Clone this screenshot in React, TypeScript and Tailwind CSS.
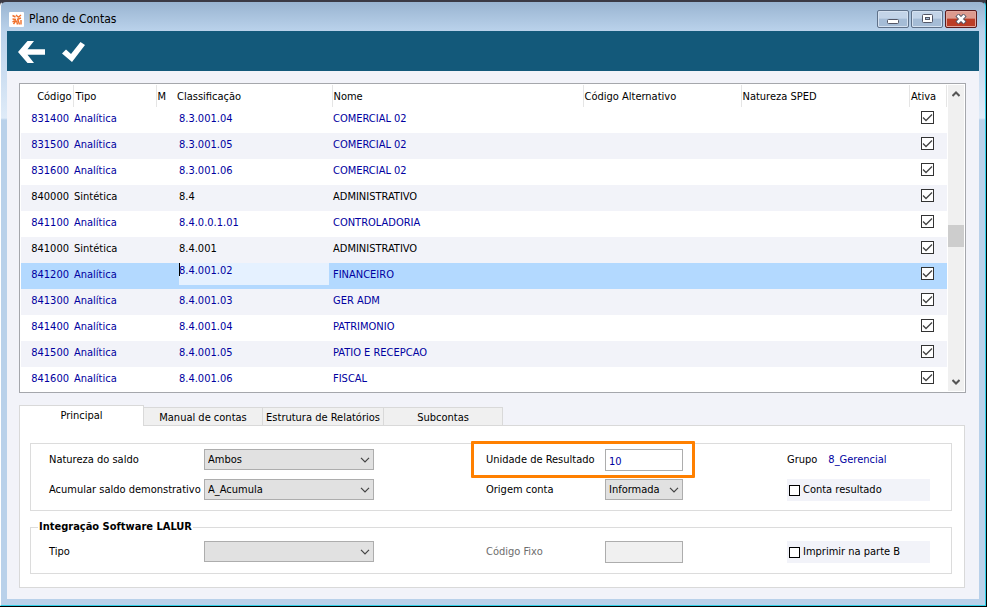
import { useState } from "react";

type Conta = {
  codigo: string;
  tipo: string;
  classificacao: string;
  nome: string;
};

const contas: Conta[] = [
  { codigo: "831400", tipo: "Analítica", classificacao: "8.3.001.04", nome: "COMERCIAL 02" },
  { codigo: "831500", tipo: "Analítica", classificacao: "8.3.001.05", nome: "COMERCIAL 02" },
  { codigo: "831600", tipo: "Analítica", classificacao: "8.3.001.06", nome: "COMERCIAL 02" },
  { codigo: "840000", tipo: "Sintética", classificacao: "8.4", nome: "ADMINISTRATIVO" },
  { codigo: "841100", tipo: "Analítica", classificacao: "8.4.0.0.1.01", nome: "CONTROLADORIA" },
  { codigo: "841000", tipo: "Sintética", classificacao: "8.4.001", nome: "ADMINISTRATIVO" },
  { codigo: "841200", tipo: "Analítica", classificacao: "8.4.001.02", nome: "FINANCEIRO" },
  { codigo: "841300", tipo: "Analítica", classificacao: "8.4.001.03", nome: "GER ADM" },
  { codigo: "841400", tipo: "Analítica", classificacao: "8.4.001.04", nome: "PATRIMONIO" },
  { codigo: "841500", tipo: "Analítica", classificacao: "8.4.001.05", nome: "PATIO E RECEPCAO" },
  { codigo: "841600", tipo: "Analítica", classificacao: "8.4.001.06", nome: "FISCAL" },
];

const tabs = [
  { label: "Principal", width: "w-[125px]" },
  { label: "Manual de contas", width: "w-[119px]" },
  { label: "Estrutura de Relatórios", width: "w-[121px]" },
  { label: "Subcontas", width: "w-[119px]" },
];

const formRow =
  "grid grid-cols-[155px_170px_14fr_119px_78px_13fr_143px] items-center pl-[18px] pr-[21px]";

const TitleBar = () => (
  <div className="flex h-[29px] items-start justify-between pl-0.5 pr-0.5">
    <div className="flex h-[34px] items-center gap-[5px] text-xs text-black">
      <svg viewBox="0 0 15 15" className="h-[15px] w-[15px]">
        <rect width="15" height="15" rx="1" fill="#fff" />
        <g fill="none" stroke="#f0712c" strokeWidth="1.4">
          <path d="M3.500 3.500l3 1.500M7 3l2 2M9 5.500l3-2.500M3.500 7l3.500.5M8 7.500l4-1.500M3.500 10l3-2M4.500 12l2.500-3.500M8.500 12.500l-1-4M10.500 12.500l-1.500-4.500M12 12.500V8" />
        </g>
      </svg>
      <span>Plano de Contas</span>
    </div>
    <div className="flex gap-0.5 pt-2">
      <button
        aria-label="Minimizar"
        className="flex h-[18px] w-8 items-center justify-center rounded-[2px] border border-[#5f7189] bg-linear-to-b from-[#c3d4e8] from-45% to-[#a5bcd6] to-50% shadow-[inset_0_0_0_1px_#d5e1f0]"
      >
        <svg viewBox="0 0 12 5" className="mt-1 h-[5px] w-3">
          <rect x=".5" y=".5" width="11" height="4" rx="1" fill="#fff" stroke="#535666" />
        </svg>
      </button>
      <button
        aria-label="Maximizar"
        className="flex h-[18px] w-8 items-center justify-center rounded-[2px] border border-[#5f7189] bg-linear-to-b from-[#c3d4e8] from-45% to-[#a5bcd6] to-50% shadow-[inset_0_0_0_1px_#d5e1f0]"
      >
        <svg viewBox="0 0 11 9" className="mb-px h-[9px] w-[11px]">
          <rect x=".5" y=".5" width="10" height="8" rx="1" fill="#fff" stroke="#535666" />
          <rect x="3.5" y="3.5" width="4" height="2" fill="#a5bcd6" stroke="#535666" />
        </svg>
      </button>
      <button
        aria-label="Fechar"
        className="flex h-[18px] w-8 items-center justify-center rounded-[2px] border border-[#5b1a1c] bg-linear-to-b from-[#dd9a8e] from-45% to-[#bb3d26] to-50% shadow-[inset_0_0_0_1px_#e2a79d]"
      >
        <svg viewBox="0 0 12 10" className="mb-px h-[10px] w-3">
          <path d="M2 1l8 8M10 1l-8 8" stroke="#535666" strokeWidth="4.500" />
          <path d="M2.500 1.500l7 7M9.500 1.500l-7 7" stroke="#fff" strokeWidth="2.500" />
        </svg>
      </button>
    </div>
  </div>
);

const Toolbar = () => (
  <div className="flex h-10 items-center gap-[17px] bg-[#13597a] pl-[11px] pt-0.5">
    <button aria-label="Voltar">
      <svg viewBox="0 0 27 22" className="h-[22px] w-[27px]" fill="#fff">
        <path d="M9.500 0H16L9.500 8.200H27v5.600H9.500L16 22H9.500L0 11z" />
      </svg>
    </button>
    <button aria-label="Confirmar">
      <svg viewBox="0 0 23 20" className="h-5 w-[23px]" fill="#fff">
        <path d="M0 11.500L4 7.500l5 4.500L18.500 0 23 3 10 20z" />
      </svg>
    </button>
  </div>
);

const GridCheckbox = ({ label }: { label: string }) => (
  <div className="relative mx-auto mb-0.5 h-[13px] w-[13px]">
    <input
      type="checkbox"
      defaultChecked
      aria-label={label}
      className="peer block h-[13px] w-[13px] appearance-none border border-[#333] bg-white"
    />
    <svg
      viewBox="0 0 13 13"
      className="pointer-events-none absolute inset-0 hidden h-[13px] w-[13px] peer-checked:block"
      fill="none"
      stroke="#444"
      strokeWidth="1.3"
    >
      <path d="M2 6.500l3 3 6-6" />
    </svg>
  </div>
);

const Grid = () => (
  <div className="mr-px flex h-[310px] overflow-hidden border border-[#a5a7ac] bg-white p-px">
    <table className="grow table-fixed self-start">
      <thead>
        <tr className="h-[22px] text-left text-black">
          <th className="w-[52px] border-r border-[#e5e5e5] pr-px pt-0.5 text-right font-normal">Código</th>
          <th className="w-[83px] pl-0.5 pt-0.5 font-normal">Tipo</th>
          <th className="w-5 border-l border-[#e5e5e5] pl-px pt-0.5 font-normal">M</th>
          <th className="w-[156px] border-r border-[#e5e5e5] pl-px pt-0.5 font-normal">Classificação</th>
          <th className="w-[251px] border-r border-[#e5e5e5] pl-px pt-0.5 font-normal">Nome</th>
          <th className="w-[158px] border-r border-[#e5e5e5] pl-px pt-0.5 font-normal">Código Alternativo</th>
          <th className="border-r border-[#e5e5e5] pl-px pt-0.5 font-normal">Natureza SPED</th>
          <th className="w-[37px] border-r border-[#e5e5e5] pl-px pt-0.5 font-normal">Ativa</th>
        </tr>
      </thead>
      <tbody>
        {contas.map((conta, i) => {
          const selected = conta.codigo === "841200";
          return (
            <tr
              key={conta.codigo}
              className={`h-[26px] ${
                selected ? "bg-[#b3d9ff]" : i % 2 ? "bg-[#f2f3f9]" : "bg-white"
              } ${conta.tipo === "Sintética" ? "text-black" : "text-[#0000a0]"}`}
            >
              <td className="pb-0.5 pr-1 text-right">{conta.codigo}</td>
              <td className="pb-0.5 pl-px">{conta.tipo}</td>
              <td></td>
              {selected ? (
                <td className="relative pb-1 pl-[3px]">
                  <input
                    aria-label="Classificação"
                    defaultValue={conta.classificacao}
                    className="block h-[22px] w-[150px] bg-[#e5f1ff] pb-2"
                  />
                  {/* text cursor */}
                  <span className="absolute left-[3px] top-0 h-[13px] w-px bg-black" />
                </td>
              ) : (
                <td className="pb-0.5 pl-[3px]">{conta.classificacao}</td>
              )}
              <td className="pb-0.5 pl-px">{conta.nome}</td>
              <td></td>
              <td></td>
              <td className="pb-1 pr-px">
                <GridCheckbox label={`Ativa ${conta.codigo}`} />
              </td>
            </tr>
          );
        })}
      </tbody>
    </table>
    {/* scrollbar */}
    <div className="ml-px flex w-4 shrink-0 flex-col items-center bg-[#f0f0f0] pb-1.5 pt-1.5">
      <svg viewBox="0 0 8 6" className="h-1.5 w-2" fill="none" stroke="#555" strokeWidth="2">
        <path d="M.5 5L4 1.500 7.500 5" />
      </svg>
      <div className="mb-auto mt-32 h-[22px] w-full bg-[#cdcdcd]" />
      <svg viewBox="0 0 8 6" className="h-1.5 w-2" fill="none" stroke="#555" strokeWidth="2">
        <path d="M.5 1L4 4.500 7.500 1" />
      </svg>
    </div>
  </div>
);

const Select = ({ id, options }: { id: string; options: string[] }) => (
  <div className="relative self-start">
    <select
      id={id}
      className="block h-[21px] w-full appearance-none border border-[#adadad] bg-[#e1e1e1] px-[3px] text-black"
    >
      {options.map((option) => (
        <option key={option}>{option}</option>
      ))}
    </select>
    <svg
      viewBox="0 0 10 6"
      className="pointer-events-none absolute right-1 top-2 h-1.5 w-2.5"
      fill="none"
      stroke="#444"
      strokeWidth="1.2"
    >
      <path d="M1 .8l4 4 4-4" />
    </svg>
  </div>
);

const Check = ({ label }: { label: string }) => (
  <label className="flex h-[22px] items-center gap-[3px] bg-[#f2f3f9] pl-0.5 text-black">
    <input
      type="checkbox"
      className="h-[11px] w-[11px] appearance-none border border-black bg-white checked:bg-[#444]"
    />
    {label}
  </label>
);

const App = () => {
  const [currentTab, setCurrentTab] = useState("Principal");

  return (
    <div className="flex min-h-screen flex-col border-b border-r border-black bg-[#3b3a45] font-['DejaVu_Sans_Condensed','DejaVu_Sans',sans-serif] text-[11px] leading-[14px]">
      <div className="flex grow flex-col rounded-t-md border border-t-2 border-[#2fd0e8] border-l-white border-t-[#3b3a45] bg-[linear-gradient(#99b4d1,#b9d1ea_28px,#dfebf8_116px,#b9d1ea_118px)] px-1.5 pb-1.5">
        <TitleBar />
        <div className="flex grow flex-col bg-[#f2f3f9]">
          <Toolbar />
          <div className="flex flex-col px-3 pb-[11px] pt-3">
            <Grid />
            {/* tabs */}
            <div className="mt-3 flex items-end">
              {tabs.map((tab) => (
                <button
                  key={tab.label}
                  onClick={() => setCurrentTab(tab.label)}
                  className={`${tab.width} border-[#d9d9d9] text-black ${
                    currentTab === tab.label
                      ? "relative -mb-px h-[21px] border border-b-0 bg-white"
                      : "h-[18px] border-r border-t bg-[#f0f0f0] pt-0.5"
                  }`}
                >
                  {tab.label}
                </button>
              ))}
            </div>
            <div className="mr-0.5 border border-[#d9d9d9] bg-white pb-[13px] pl-[10px] pr-3 pt-[17px] text-black">
              {currentTab === "Principal" && (
                <>
                  <div className="flex flex-col gap-2 border border-[#dcdcdc] pb-[9px] pt-[5px]">
                    <div className={formRow}>
                      <label htmlFor="natureza">Natureza do saldo</label>
                      <Select id="natureza" options={["Ambos", "Devedor", "Credor"]} />
                      <span />
                      <div className="relative col-span-2 grid grid-cols-[119px_78px] items-center">
                        <div className="pointer-events-none absolute -bottom-[7px] -left-[15px] -right-3 -top-2 rounded-[1px] border-3 border-[#ff8000]" />
                        <label htmlFor="unidade">Unidade de Resultado</label>
                        <input
                          id="unidade"
                          defaultValue="10"
                          className="h-[22px] border border-[#adadad] bg-white px-[3px] pt-0.5 text-[#0000a0]"
                        />
                      </div>
                      <span />
                      <div className="flex gap-[11px]">
                        <span>Grupo</span>
                        <span className="text-[#0000a0]">8_Gerencial</span>
                      </div>
                    </div>
                    <div className={formRow}>
                      <label htmlFor="acumular">Acumular saldo demonstrativo</label>
                      <Select id="acumular" options={["A_Acumula", "N_Não acumula"]} />
                      <span />
                      <label htmlFor="origem">Origem conta</label>
                      <Select id="origem" options={["Informada", "Calculada"]} />
                      <span />
                      <Check label="Conta resultado" />
                    </div>
                  </div>
                  <fieldset className="mt-[9px] border border-[#dcdcdc] pb-[10px] pt-[7px]">
                    <legend className="ml-[7px] px-px font-bold">Integração Software LALUR</legend>
                    <div className={formRow}>
                      <label htmlFor="tipo">Tipo</label>
                      <Select id="tipo" options={["", "Adição", "Exclusão"]} />
                      <span />
                      <label htmlFor="fixo" className="text-[#6d6d6d]">
                        Código Fixo
                      </label>
                      <input id="fixo" disabled className="h-[22px] border border-[#adadad] bg-[#f0f0f0] px-[3px]" />
                      <span />
                      <Check label="Imprimir na parte B" />
                    </div>
                  </fieldset>
                </>
              )}
            </div>
          </div>
        </div>
      </div>
    </div>
  );
};

export default App;
